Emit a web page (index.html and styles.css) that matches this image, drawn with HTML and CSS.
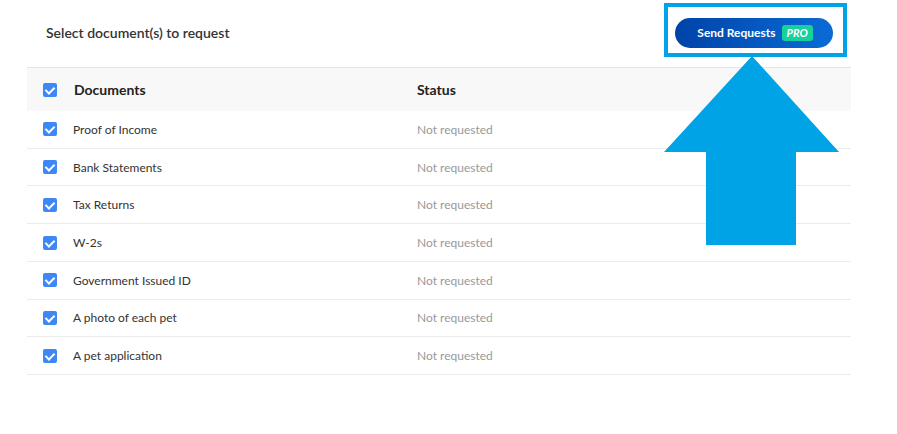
FILE: index.html
```html
<!DOCTYPE html>
<html>
<head>
<meta charset="utf-8">
<link rel="stylesheet" href="styles.css">
</head>
<body>
<div class="page">
  <div class="header">
    <div class="title">Select document(s) to request</div>
    <button class="send">Send Requests <span class="pro">PRO</span></button>
  </div>
  <div class="table">
    <div class="row head">
      <div class="cell doc"><span class="cb"></span><span>Documents</span></div>
      <div class="cell status">Status</div>
    </div>
    <div class="row"><div class="cell doc"><span class="cb"></span><span>Proof of Income</span></div><div class="cell status">Not requested</div></div>
    <div class="row"><div class="cell doc"><span class="cb"></span><span>Bank Statements</span></div><div class="cell status">Not requested</div></div>
    <div class="row"><div class="cell doc"><span class="cb"></span><span>Tax Returns</span></div><div class="cell status">Not requested</div></div>
    <div class="row"><div class="cell doc"><span class="cb"></span><span>W-2s</span></div><div class="cell status">Not requested</div></div>
    <div class="row"><div class="cell doc"><span class="cb"></span><span>Government Issued ID</span></div><div class="cell status">Not requested</div></div>
    <div class="row"><div class="cell doc"><span class="cb"></span><span>A photo of each pet</span></div><div class="cell status">Not requested</div></div>
    <div class="row"><div class="cell doc"><span class="cb"></span><span>A pet application</span></div><div class="cell status">Not requested</div></div>
  </div>
</div>
<div class="highlight"></div>
<svg class="arrow" width="176" height="190" viewBox="0 0 176 190"><polygon points="88,0 175,96 132,96 132,189 42,189 42,96 0,96" fill="#00a3e6"/></svg>
</body>
</html>
```
FILE: styles.css
```css
* { box-sizing: border-box; }
body { margin: 0; background: #fff; font-family: Lato, "Open Sans", sans-serif; color: #333; }
.page { width: 851px; padding-left: 27px; }
.header { height: 67px; display: flex; align-items: center; justify-content: space-between; padding: 0 18px 2px 19px; }
.title { font-size: 14px; font-weight: 600; color: #333; }
.send { height: 30px; width: 158px; border: 0; border-radius: 15px; background: linear-gradient(90deg, #0043a8, #0a6bd6); color: #fff; font-family: inherit; font-size: 12px; font-weight: 700; display: flex; align-items: center; justify-content: center; gap: 6px; padding: 0 0 0 2px; }
.pro { background: #17d19b; color: #fff; font-style: italic; font-weight: 700; font-size: 11px; border-radius: 3px; padding: 1px 5px; line-height: 14px; }
.table { border-top: 1px solid #e6e6e6; }
.row { display: flex; align-items: center; height: 37.72px; border-bottom: 1px solid #ebebeb; font-size: 12px; }
.row.head { height: 43px; background: #f8f8f8; border-bottom: 0; font-size: 14px; font-weight: 700; color: #222; }
.cell.doc { width: 390px; display: flex; align-items: center; padding-left: 16px; }
.cb { width: 14px; height: 14px; border-radius: 2px; background: #3d88f5; margin-right: 16px; position: relative; flex: none; }
.row.head .cb { margin-right: 17px; }
.cb::after { content: ""; position: absolute; left: 4px; top: 2px; width: 4px; height: 7px; border: solid #fff; border-width: 0 2px 2px 0; transform: rotate(45deg); }
.cell.status { color: #999; }
.row.head .cell.status { color: #222; }
.highlight { position: absolute; left: 664px; top: 3px; width: 183px; height: 54px; border: 4px solid #00a3e6; }
.arrow { position: absolute; left: 664px; top: 56px; }
```
